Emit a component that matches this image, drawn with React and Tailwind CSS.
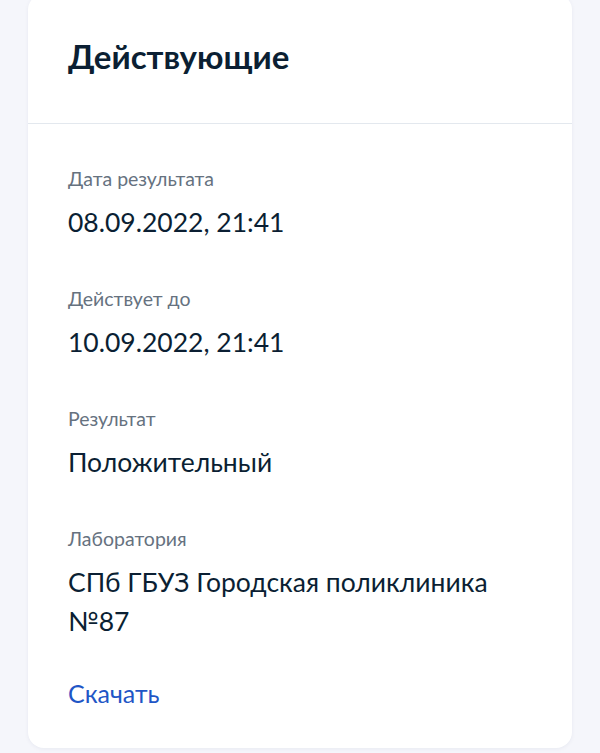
import React from "react";

const rows = [
  { label: "Дата результата", value: "08.09.2022, 21:41" },
  { label: "Действует до", value: "10.09.2022, 21:41" },
  { label: "Результат", value: "Положительный" },
  { label: "Лаборатория", value: "СПб ГБУЗ Городская поликлиника №87" },
];

export default function App() {
  return (
    <div
      className="min-h-[753px] w-[600px] overflow-hidden bg-[#f5f6fb] px-[28px]"
      style={{ fontFamily: "Lato, 'Noto Sans', sans-serif" }}
    >
      <div className="-mt-[6px] rounded-2xl bg-white shadow-[0_1px_4px_rgba(18,38,90,0.06)]">
        <div className="px-[40px] pt-[42px] pb-[47px]">
          <h1 className="text-[33px] font-bold leading-[40px] text-[#0b1f33]">Действующие</h1>
        </div>
        <div className="h-px bg-[#e3e8ee]" />
        <div className="flex flex-col gap-[43px] px-[40px] pt-[41px]">
          {rows.map((r) => (
            <div key={r.label} className="flex flex-col gap-[10px]">
              <div className="text-[19.5px] leading-[28px] text-[#66727f]">{r.label}</div>
              <div className="text-[26.5px] leading-[39px] text-[#0b1f33]">{r.value}</div>
            </div>
          ))}
        </div>
        <div className="px-[40px] pt-[33px] pb-[35px]">
          <a className="text-[25px] leading-[39px] text-[#1f56c6]">Скачать</a>
        </div>
      </div>
    </div>
  );
}
